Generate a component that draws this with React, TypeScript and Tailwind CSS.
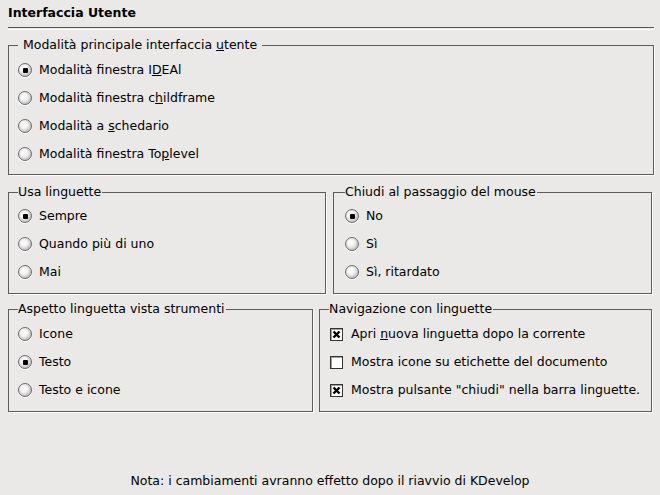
import React from "react";

type Opt = { label: React.ReactNode; checked?: boolean };

function Radio({ checked }: { checked?: boolean }) {
    return (
        <span className="flex h-[14px] w-[14px] shrink-0 items-center justify-center rounded-full border border-[#6f6f6f] bg-[radial-gradient(circle_at_42%_40%,#ffffff_0%,#f2f2f2_35%,#c2c2c2_70%,#8e8e8e_100%)] shadow-[0_1px_0_#ffffff]">
            {checked && <span className="h-[5px] w-[5px] rounded-[1px] bg-black" />}
        </span>
    );
}

function Check({ checked }: { checked?: boolean }) {
    return (
        <span className="flex h-[13px] w-[13px] shrink-0 items-center justify-center border border-[#333333] bg-white shadow-[inset_1px_1px_0_#a0a0a0]">
            {checked && (
                <svg width="9" height="9" viewBox="0 0 9 9">
                    <path d="M1.5 1.5 L7.5 7.5 M7.5 1.5 L1.5 7.5" stroke="#000" strokeWidth="2.4" />
                </svg>
            )}
        </span>
    );
}

function Group({
    title,
    options,
    kind = "radio",
    className = "",
    spaced,
    top = "pt-[4px]",
}: {
    title: React.ReactNode;
    options: Opt[];
    kind?: "radio" | "check";
    className?: string;
    spaced?: boolean;
    top?: string;
}) {
    return (
        <fieldset className={`border border-[#5c5c5c] pl-[9px] pr-2 shadow-[1px_1px_0_#ffffff] ${className}`}>
            <legend className={`leading-[14px] ${spaced ? "px-[5px]" : "pr-[1px]"}`}>{title}</legend>
            <div className={`flex flex-col ${top}`}>
                {options.map((o, i) => (
                    <div key={i} className={`flex h-[28px] items-center ${kind === "radio" ? "gap-[7px]" : "gap-[8px] pl-[1px]"}`}>
                        {kind === "radio" ? <Radio checked={o.checked} /> : <Check checked={o.checked} />}
                        <span className="leading-[14px]">{o.label}</span>
                    </div>
                ))}
            </div>
        </fieldset>
    );
}

export default function App() {
    return (
        <div className="flex h-[495px] w-[660px] flex-col bg-[#eae9e7] px-2 text-[12.5px] text-black [font-family:'DejaVu_Sans',sans-serif]">
            <div className="pt-[6px] font-bold leading-[14px]">Interfaccia Utente</div>
            <div className="mt-[7px] h-[2px] w-[646px] border-t border-[#555555] shadow-[0_1px_0_#ffffff]" />

            <Group
                className="mt-[9px] w-[646px] pb-[6px]"
                spaced
                title={<>Modalità principale interfaccia <u>u</u>tente</>}
                options={[
                    { label: <>Modalità finestra I<u>D</u>EAl</>, checked: true },
                    { label: <>Modalità finestra c<u>h</u>ildframe</> },
                    { label: <>Modalità a <u>s</u>chedario</> },
                    { label: <>Modalità finestra To<u>p</u>level</> },
                ]}
            />

            <div className="mt-[10px] flex gap-[7px]">
                <Group
                    className="w-[319px] pb-[7px]"
                    top="pt-[3px]"
                    title="Usa linguette"
                    options={[
                        { label: "Sempre", checked: true },
                        { label: "Quando più di uno" },
                        { label: "Mai" },
                    ]}
                />
                <Group
                    className="w-[320px] pb-[7px] pl-[11px]"
                    top="pt-[3px]"
                    title="Chiudi al passaggio del mouse"
                    options={[{ label: "No", checked: true }, { label: "Sì" }, { label: "Sì, ritardato" }]}
                />
            </div>

            <div className="mt-[8px] flex gap-[6px]">
                <Group
                    className="w-[306px] pb-[7px]"
                    title="Aspetto linguetta vista strumenti"
                    options={[{ label: "Icone" }, { label: "Testo", checked: true }, { label: "Testo e icone" }]}
                />
                <Group
                    className="w-[334px] pb-[7px]"
                    kind="check"
                    title="Navigazione con linguette"
                    options={[
                        { label: <>Apri <u>n</u>uova linguetta dopo la corrente</>, checked: true },
                        { label: "Mostra icone su etichette del documento" },
                        { label: <>Mostra pulsante "chiudi" nella barra linguette.</>, checked: true },
                    ]}
                />
            </div>

            <div className="mt-auto pb-[7px] text-center leading-[14px]">
                Nota: i cambiamenti avranno effetto dopo il riavvio di KDevelop
            </div>
        </div>
    );
}
